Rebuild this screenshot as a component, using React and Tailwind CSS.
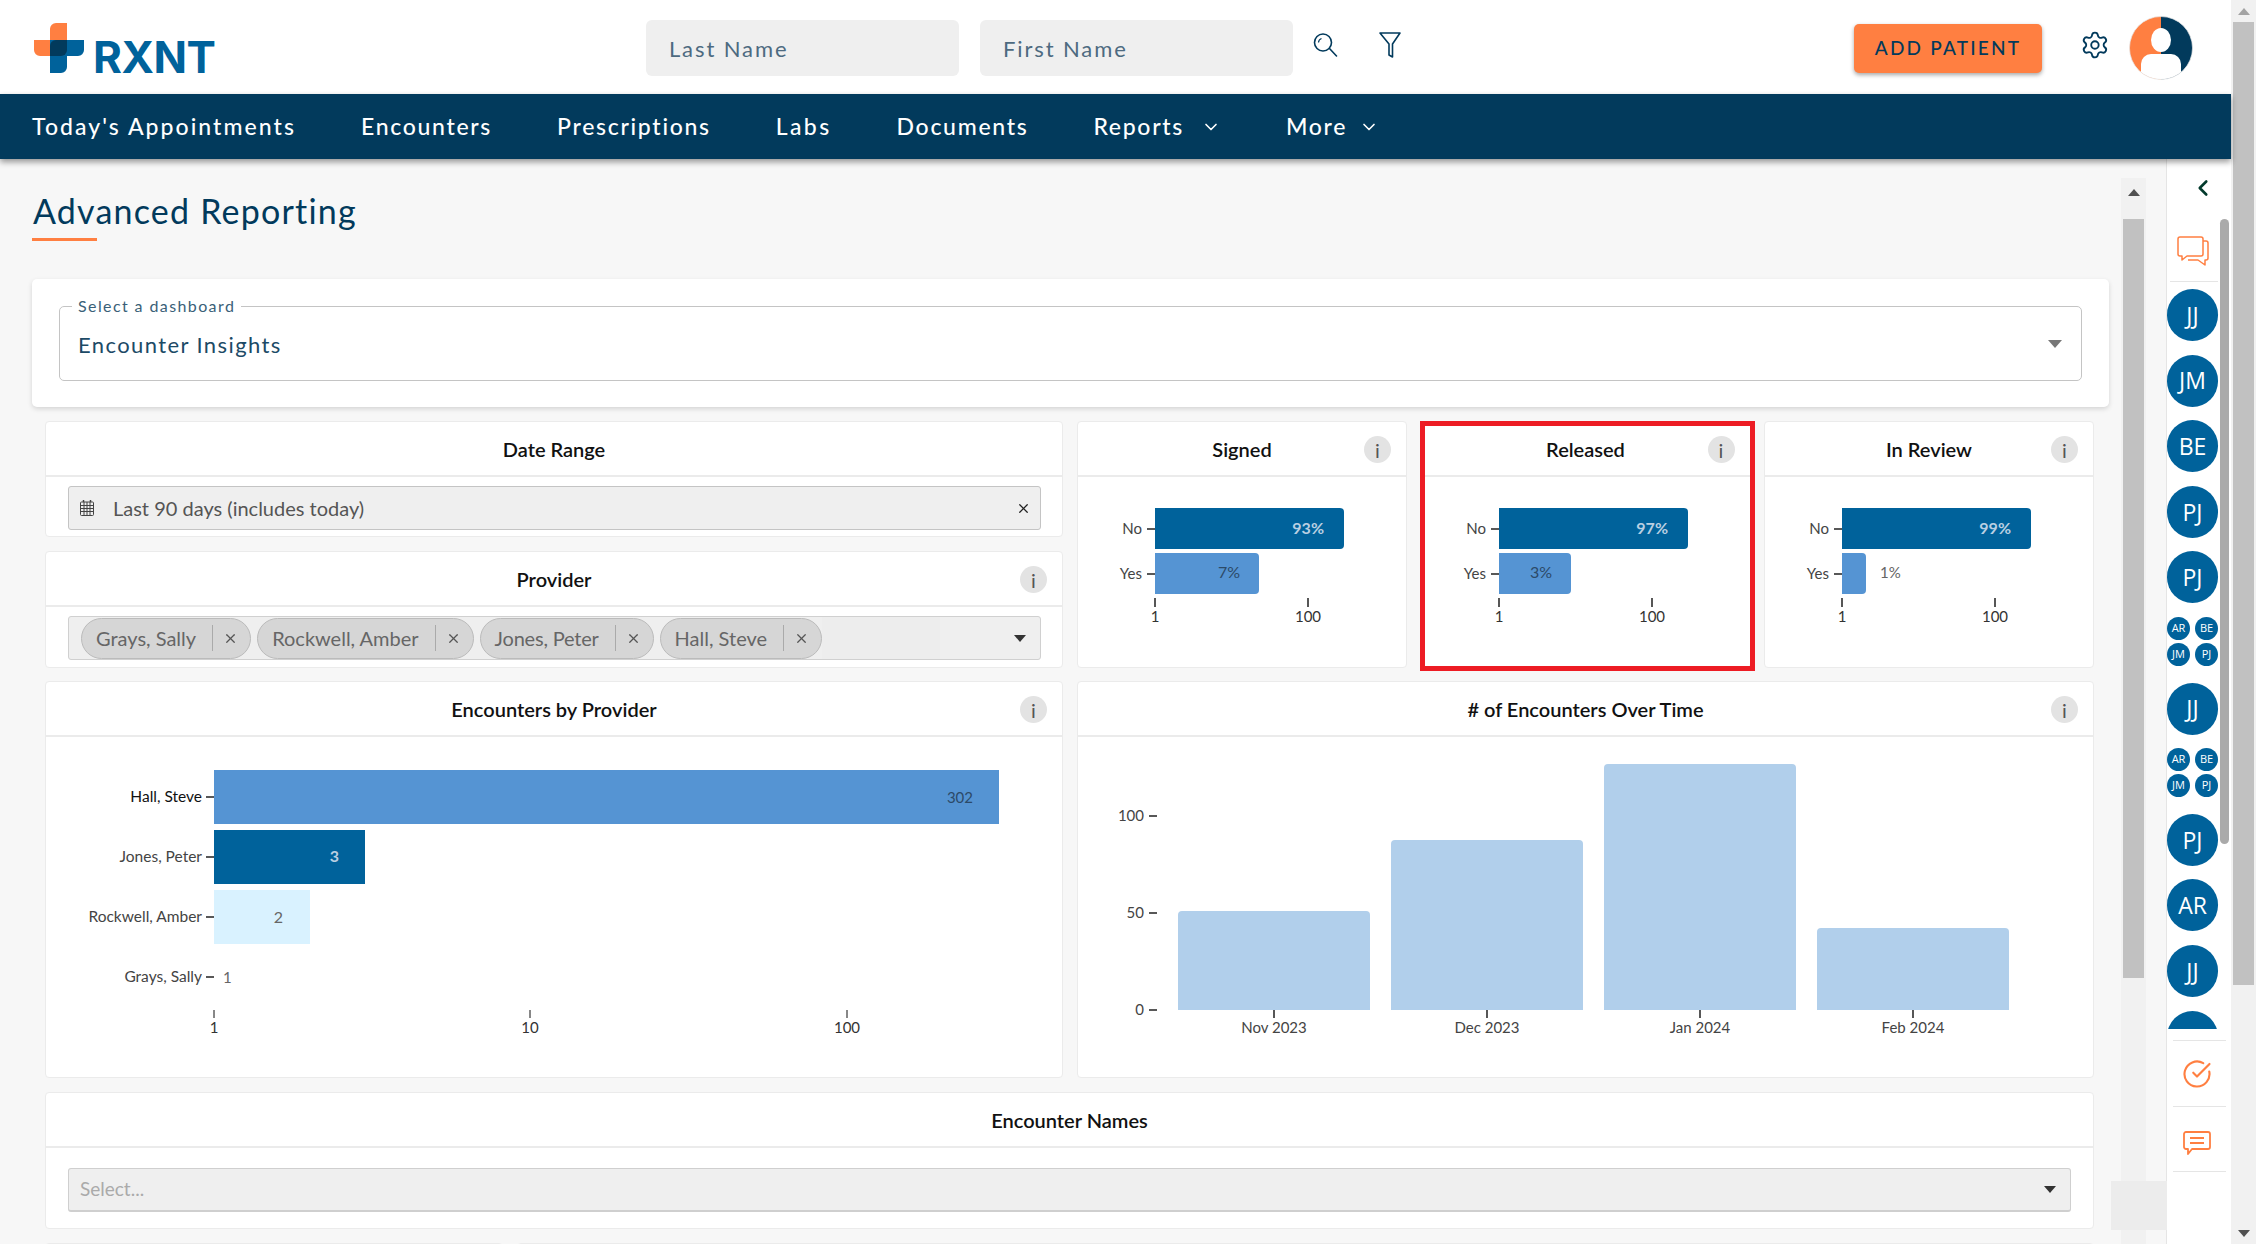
import { ChevronDown, ChevronLeft, CircleCheckBig, Settings, X } from 'lucide-react';

const CHIPS = [
  { name: 'Grays, Sally', cls: '' },
  { name: 'Rockwell, Amber', cls: '' },
  { name: 'Jones, Peter', cls: 'tracking-[-0.2px]' },
  { name: 'Hall, Steve', cls: '' },
];
const SIDE = ['JJ', 'JM', 'BE', 'PJ', 'PJ', null, 'JJ', null, 'PJ', 'AR', 'JJ', ''];

function Logo() {
  return (
    <div className="flex items-end gap-[9px]">
      <svg width="50" height="50" viewBox="0 0 50 50">
        <path d="M16 17V6a6 6 0 0 1 6-6h11v33H6a6 6 0 0 1-6-6V17z" fill="#ff7f41" />
        <path d="M16 17h34v10a6 6 0 0 1-6 6H33v11a6 6 0 0 1-6 6H16z" fill="#00629b" />
        <path d="M22 17h11v10a6 6 0 0 1-6 6H16V23a6 6 0 0 1 6-6z" fill="#023a5c" />
      </svg>
      <span className="font-['Inter',sans-serif] text-[44px] font-bold leading-[32px] tracking-[-0.5px] text-[#00629b]">RXNT</span>
    </div>
  );
}

function SearchIcon() {
  return (
    <svg width="25" height="24" viewBox="0 0 25 24" fill="none" stroke="#023a5c" strokeWidth="1.6">
      <circle cx="10" cy="9.5" r="8.5" />
      <path d="M16.5 15.5l7 7.5" strokeLinecap="round" />
      <path d="M5.5 9.5a4.5 4.5 0 0 1 3-4" strokeWidth="1.2" />
    </svg>
  );
}

function FilterIcon() {
  return (
    <svg width="22" height="26" viewBox="0 0 22 26" fill="none" stroke="#023a5c" strokeWidth="1.6" strokeLinejoin="round">
      <path d="M1 1h20l-7.5 11v13l-3.5-2V12z" />
    </svg>
  );
}

function UserAvatar() {
  return (
    <svg width="64" height="64" viewBox="0 0 64 64">
      <defs>
        <clipPath id="userclip">
          <circle cx="32" cy="32" r="31.5" />
        </clipPath>
      </defs>
      <g clipPath="url(#userclip)">
        <rect width="32" height="64" fill="#ff7f41" />
        <rect x="32" width="32" height="64" fill="#023a5c" />
        <ellipse cx="32" cy="24" rx="10" ry="12" fill="#fff" />
        <path d="M12 64V48a10 10 0 0 1 10-10h20a10 10 0 0 1 10 10v16z" fill="#fff" />
      </g>
      <circle cx="32" cy="32" r="31.5" fill="none" stroke="#e5e5e5" strokeWidth="0.7" />
    </svg>
  );
}

function Header() {
  return (
    <div className="h-[94px] bg-white flex items-center pl-[34px] pr-[38px] pt-[2px]">
      <div className="w-[614.5px] pb-[1px]">
        <Logo />
      </div>
      <div className="flex gap-[21px]">
        <div className="w-[313px] h-[56px] bg-[#efefef] rounded-[6px] flex items-center pl-[23px] text-[22px] tracking-[1.9px] text-[#4d6a80]">Last Name</div>
        <div className="w-[313px] h-[56px] bg-[#efefef] rounded-[6px] flex items-center pl-[23px] text-[22px] tracking-[1.9px] text-[#4d6a80]">First Name</div>
      </div>
      <div className="ml-[20px] mb-[7px]">
        <SearchIcon />
      </div>
      <div className="ml-[41px] mb-[6px]">
        <FilterIcon />
      </div>
      <button className="ml-[453px] w-[189px] h-[49px] bg-[#ff7f41] rounded-[5px] shadow-[0_2px_4px_rgba(0,0,0,0.35)] text-[19px] font-medium tracking-[2.2px] text-[#023a5c]">ADD PATIENT</button>
      <Settings className="ml-[38px] mb-[6px]" size={30} color="#023a5c" strokeWidth={1.5} />
      <div className="ml-[19px]">
        <UserAvatar />
      </div>
    </div>
  );
}

function Nav() {
  return (
    <div className="relative z-10 h-[65px] bg-[#023a5c] shadow-[0_3px_6px_rgba(0,0,0,0.4)] flex items-center pl-[32px] gap-[65px] text-[23px] font-medium tracking-[1.7px] text-white">
      <span className="tracking-[2.05px]">Today's Appointments</span>
      <span>Encounters</span>
      <span>Prescriptions</span>
      <span className="tracking-[2.4px]">Labs</span>
      <span>Documents</span>
      <span className="flex items-center gap-[17px]">
        Reports <ChevronDown size={20} />
      </span>
      <span className="flex items-center gap-[12px]">
        More <ChevronDown size={20} />
      </span>
    </div>
  );
}

function Info() {
  return (
    <div className="absolute right-[15px] top-[14px] w-[27px] h-[27px] rounded-full bg-[#e3e3e3] flex items-center justify-center text-[20px] leading-none text-[#555]">i</div>
  );
}

function Panel({ title, info, className = '', children }) {
  return (
    <div className={`relative bg-white border border-[#ebebeb] rounded-[4px] ${className}`}>
      <div className="h-[55px] border-b-2 border-[#ebebeb] flex items-center justify-center text-[20px] font-semibold text-[#111]">{title}</div>
      {info && <Info />}
      {children}
    </div>
  );
}

function CalendarIcon() {
  return (
    <svg width="14" height="16" viewBox="0 0 14 16" fill="none" stroke="#444" strokeWidth="1">
      <rect x="0.5" y="2" width="13" height="13.5" rx="1" />
      <path d="M0.5 5.5h13M0.5 8.5h13M0.5 11.5h13M4 2v13.5M7 2v13.5M10 2v13.5" />
      <path d="M3.5 0v2M10.5 0v2" strokeWidth="1.5" />
    </svg>
  );
}

function DateField() {
  return (
    <div className="ml-[22px] mr-[21px] mt-[9px] h-[44px] bg-[#efefef] border border-[#c4c4c4] rounded-[3px] flex items-center pl-[11px] pr-[9px] text-[20px] text-[#555]">
      <CalendarIcon />
      <span className="ml-[19px] flex-1">Last 90 days (includes today)</span>
      <X size={15} color="#222" strokeWidth={2} />
    </div>
  );
}

function Caret() {
  return <div className="w-0 h-0 border-l-[6px] border-r-[6px] border-t-[7px] border-l-transparent border-r-transparent border-t-[#333]" />;
}

function ProviderField() {
  return (
    <div className="ml-[22px] mr-[21px] mt-[9px] h-[44px] bg-[#efefef] border border-[#d0d0d0] rounded-[3px] flex items-center pl-[12px] pr-[14px]">
      <div className="flex gap-[6px] flex-1 items-center">
        {CHIPS.map((c) => (
          <div key={c.name} className={`h-[41px] bg-[#d6d6d6] border border-[#bbb] rounded-full flex items-center pl-[14px] pr-[12px] text-[20px] text-[#666] ${c.cls}`}>
            <span>{c.name}</span>
            <span className="ml-[16px] h-[26px] border-l border-[#aaa] pl-[10px] flex items-center">
              <X size={15} color="#555" strokeWidth={2} />
            </span>
          </div>
        ))}
        <div className="-ml-[6px] w-[118px] h-[42px] bg-[#ededed]" />
      </div>
      <Caret />
    </div>
  );
}

function MiniChart({ noLabel, yesLabel, yesWidth }) {
  const outside = yesWidth < 40;
  return (
    <svg width="328" height="190" viewBox="0 0 328 190" className="block">
      <path d="M77 31h185a4 4 0 0 1 4 4v33a4 4 0 0 1-4 4H77z" fill="#00629b" />
      <path d={`M77 76h${yesWidth - 4}a4 4 0 0 1 4 4v33a4 4 0 0 1-4 4H77z`} fill="#5594d3" />
      <text x="246" y="57" textAnchor="end" fontSize="16" fontWeight="700" fill="#b9cfe2">{noLabel}</text>
      {outside ? (
        <text x={77 + yesWidth + 14} y="101" fontSize="15" fill="#666">{yesLabel}</text>
      ) : (
        <text x={77 + yesWidth - 19} y="101" textAnchor="end" fontSize="16" fill="#2c4a68">{yesLabel}</text>
      )}
      <path d="M69 52h8M69 97h8" stroke="#222" strokeWidth="1.5" />
      <text x="64" y="57" textAnchor="end" fontSize="15" fill="#444">No</text>
      <text x="64" y="102" textAnchor="end" fontSize="15" fill="#444">Yes</text>
      <path d="M77 121v9M230 121v9" stroke="#111" strokeWidth="1.4" />
      <text x="77" y="145" textAnchor="middle" fontSize="15" fill="#333">1</text>
      <text x="230" y="145" textAnchor="middle" fontSize="15" fill="#333">100</text>
    </svg>
  );
}

function ProviderChart() {
  return (
    <svg width="1015" height="340" viewBox="46 735 1015 340" className="block">
      <rect x="214" y="768" width="785" height="54" fill="#5594d3" />
      <rect x="214" y="828" width="151" height="54" fill="#00629b" />
      <rect x="214" y="888" width="96" height="54" fill="#d9f2ff" />
      <text x="973" y="801" textAnchor="end" fontSize="15" fill="#2c4a68">302</text>
      <text x="339" y="860" textAnchor="end" fontSize="16" fontWeight="700" fill="#b9cfe2">3</text>
      <text x="283" y="921" textAnchor="end" fontSize="16" fill="#666">2</text>
      <text x="223" y="981" fontSize="15" fill="#666">1</text>
      <path d="M206 795h8M206 855h8M206 915h8M206 975h8" stroke="#222" strokeWidth="1.5" />
      <text x="202" y="800" textAnchor="end" fontSize="15.5" fill="#111">Hall, Steve</text>
      <text x="202" y="860" textAnchor="end" fontSize="15.5" fill="#444">Jones, Peter</text>
      <text x="202" y="920" textAnchor="end" fontSize="15.5" fill="#444">Rockwell, Amber</text>
      <text x="202" y="980" textAnchor="end" fontSize="15.5" fill="#444">Grays, Sally</text>
      <path d="M214 1008v8M530 1008v8M847 1008v8" stroke="#111" strokeWidth="1" />
      <text x="214" y="1031" textAnchor="middle" fontSize="15" fill="#333">1</text>
      <text x="530" y="1031" textAnchor="middle" fontSize="15" fill="#333">10</text>
      <text x="847" y="1031" textAnchor="middle" fontSize="15" fill="#333">100</text>
    </svg>
  );
}

function TimeChart() {
  const bars = [
    { x: 1178, top: 909, label: 'Nov 2023' },
    { x: 1391, top: 838, label: 'Dec 2023' },
    { x: 1604, top: 762, label: 'Jan 2024' },
    { x: 1817, top: 926, label: 'Feb 2024' },
  ];
  return (
    <svg width="1015" height="340" viewBox="1078 735 1015 340" className="block">
      {bars.map((b) => (
        <g key={b.label}>
          <path d={`M${b.x} 1008V${b.top + 4}a4 4 0 0 1 4-4h184a4 4 0 0 1 4 4V1008z`} fill="#b1cfeb" />
          <path d={`M${b.x + 96} 1008v8`} stroke="#111" strokeWidth="1.4" />
          <text x={b.x + 96} y="1031" textAnchor="middle" fontSize="15" fill="#444">{b.label}</text>
        </g>
      ))}
      <path d="M1149 814h8M1149 911h8M1149 1008h8" stroke="#222" strokeWidth="1.5" />
      <text x="1144" y="819" textAnchor="end" fontSize="15" fill="#444">100</text>
      <text x="1144" y="916" textAnchor="end" fontSize="15" fill="#444">50</text>
      <text x="1144" y="1013" textAnchor="end" fontSize="15" fill="#444">0</text>
    </svg>
  );
}

function Dashboard() {
  return (
    <div className="ml-[45px] mt-[14px] w-[2049px] flex flex-col">
      <div className="grid grid-cols-[1018px_1017px] gap-x-[14px] gap-y-[13px]">
        <div className="flex flex-col gap-[14px]">
          <Panel title="Date Range" className="h-[116px]">
            <DateField />
          </Panel>
          <Panel title="Provider" info className="h-[117px]">
            <ProviderField />
          </Panel>
        </div>
        <div className="grid grid-cols-3 gap-[13.5px] h-[247px]">
          <Panel title="Signed" info>
            <MiniChart noLabel="93%" yesLabel="7%" yesWidth={104} />
          </Panel>
          <div className="relative">
            <Panel title="Released" info className="h-full">
              <MiniChart noLabel="97%" yesLabel="3%" yesWidth={72} />
            </Panel>
            <div className="absolute -left-[1px] top-0 w-[335px] h-[250px] border-[5px] border-[#ed1c24]" />
          </div>
          <Panel title="In Review" info>
            <MiniChart noLabel="99%" yesLabel="1%" yesWidth={24} />
          </Panel>
        </div>
        <Panel title="Encounters by Provider" info className="h-[397px]">
          <ProviderChart />
        </Panel>
        <Panel title="# of Encounters Over Time" info className="h-[397px]">
          <TimeChart />
        </Panel>
      </div>
      <Panel title="Encounter Names" className="mt-[14px] h-[137px]">
        <div className="mx-[22px] mt-[20px] h-[44px] bg-[#efefef] border border-[#cfcfcf] border-b-2 rounded-[3px] flex items-center pl-[11px] pr-[14px] text-[19px] text-[#aaa]">
          <span className="flex-1">Select...</span>
          <Caret />
        </div>
      </Panel>
      <div className="mt-[14px] flex gap-[14px]">
        <div className="w-[458px] h-[60px] bg-white border border-[#ebebeb] rounded-[4px]" />
        <div className="flex-1 h-[60px] bg-white border border-[#ebebeb] rounded-[4px]" />
      </div>
    </div>
  );
}

function ChatIcon() {
  return (
    <svg width="32" height="30" viewBox="0 0 32 30" fill="none" stroke="#ff7f41" strokeWidth="1.5" strokeLinejoin="round">
      <path d="M3 1h21a2 2 0 0 1 2 2v15a2 2 0 0 1-2 2H10l-5 4v-4H3a2 2 0 0 1-2-2V3a2 2 0 0 1 2-2z" />
      <path d="M26 5h3a2 2 0 0 1 2 2v15a2 2 0 0 1-2 2h-1v5l-7-5H11" />
    </svg>
  );
}

function CommentIcon() {
  return (
    <svg width="28" height="24" viewBox="0 0 28 24" fill="none" stroke="#ff7f41" strokeWidth="1.8" strokeLinejoin="round">
      <path d="M3 1h22a2 2 0 0 1 2 2v13a2 2 0 0 1-2 2H9l-4 5v-5H3a2 2 0 0 1-2-2V3a2 2 0 0 1 2-2z" />
      <path d="M7 7h14M7 12h14" />
    </svg>
  );
}

function Circle({ label }) {
  return (
    <div className="w-[51px] h-[52px] shrink-0 rounded-full bg-[#00629b] flex items-center justify-center font-['Open_Sans',sans-serif] text-[23px] text-white">{label}</div>
  );
}

function CircleGroup() {
  return (
    <div className="w-[51px] h-[52px] shrink-0 grid grid-cols-[23px_23px] gap-x-[5px] gap-y-[3px] content-start">
      {['AR', 'BE', 'JM', 'PJ'].map((l) => (
        <div key={l} className="h-[23px] rounded-full bg-[#00629b] flex items-center justify-center font-['Open_Sans',sans-serif] text-[11px] text-white">{l}</div>
      ))}
    </div>
  );
}

function Sidebar() {
  return (
    <div className="relative w-[65px] bg-white border-l border-[#e5e5e5] flex flex-col overflow-hidden">
      <div className="h-[122px] border-0 flex flex-col">
        <div className="h-[62px] pl-[23px] pt-[16px]">
          <ChevronLeft size={26} color="#023a2c" strokeWidth={2.4} />
        </div>
        <div className="pl-[10px] pt-[15px]">
          <ChatIcon />
        </div>
      </div>
      <div className="ml-[3px] w-[48px] border-t border-[#e5e5e5]" />
      <div className="mt-[7px] h-[740px] overflow-hidden flex flex-col gap-[13.6px]">
        {SIDE.map((s, i) => (s === null ? <CircleGroup key={i} /> : <Circle key={i} label={s} />))}
      </div>
      <div className="ml-[6px] mt-[11px] w-[53px] border-t border-[#e5e5e5]" />
      <div className="h-[65px] pl-[15px] flex items-center">
        <CircleCheckBig size={30} color="#ff7f41" strokeWidth={1.7} />
      </div>
      <div className="ml-[6px] w-[53px] border-t border-[#e5e5e5]" />
      <div className="h-[64px] pl-[16px] pt-[8px] flex items-center">
        <CommentIcon />
      </div>
      <div className="ml-[6px] w-[53px] border-t border-[#e5e5e5]" />
      <div className="absolute left-[53px] top-[60px] w-[9px] h-[625px] rounded-full bg-[#aaa]" />
    </div>
  );
}

function ArrowUp({ color = '#505050' }) {
  return <div className="w-0 h-0 border-l-[6px] border-r-[6px] border-b-[7px] border-l-transparent border-r-transparent" style={{ borderBottomColor: color }} />;
}

function ArrowDown({ color = '#505050' }) {
  return <div className="w-0 h-0 border-l-[6px] border-r-[6px] border-t-[7px] border-l-transparent border-r-transparent" style={{ borderTopColor: color }} />;
}

export default function App() {
  return (
    <div className="w-[2256px] h-[1244px] overflow-hidden flex font-['Lato',sans-serif] bg-[#f7f7f7]">
      <div className="w-[2231px] h-full flex flex-col">
        <Header />
        <Nav />
        <div className="relative flex-1 flex min-h-0">
          <div className="w-[2122px] overflow-hidden">
            <div className="pl-[33px] pt-[29px]">
              <h1 className="text-[34px] leading-[46px] tracking-[1.2px] text-[#023a5c]">Advanced Reporting</h1>
              <div className="-ml-[1px] mt-[4px] w-[65px] h-[3px] bg-[#ff7f41]" />
            </div>
            <div className="ml-[32px] mt-[38px] w-[2077px] h-[128px] bg-white rounded-[5px] shadow-[0_2px_5px_rgba(0,0,0,0.14)] px-[27px] pt-[19px]">
              <fieldset className="relative h-[83px] border border-[#c4c4c4] rounded-[5px]">
                <legend className="ml-[12px] px-[6px] text-[16px] tracking-[1.4px] text-[#3a5f78] leading-none">Select a dashboard</legend>
                <div className="flex items-center h-[60px] pl-[18px] pr-[19px] text-[22px] tracking-[1.4px] text-[#1c4a66]">
                  <span className="flex-1">Encounter Insights</span>
                  <div className="w-0 h-0 border-l-[7px] border-r-[7px] border-t-[8px] border-l-transparent border-r-transparent border-t-[#777]" />
                </div>
              </fieldset>
            </div>
            <Dashboard />
          </div>
          <div className="mt-[19px] w-[25px] bg-[#f1f1f1] flex flex-col items-center">
            <div className="h-[22px] mt-[11px]">
              <ArrowUp />
            </div>
            <div className="mt-[8px] w-[21px] h-[759px] bg-[#c1c1c1]" />
          </div>
          <div className="w-[20px]" />
          <Sidebar />
          <div className="absolute left-[2111px] bottom-[14px] w-[56px] h-[49px] bg-[#ececec]" />
        </div>
      </div>
      <div className="w-[25px] h-full bg-[#f1f1f1] flex flex-col items-center">
        <div className="h-[22px] pt-[8px]">
          <ArrowUp color="#a3a3a3" />
        </div>
        <div className="w-[21px] h-[963px] bg-[#c1c1c1]" />
        <div className="flex-1" />
        <div className="pb-[7px]">
          <ArrowDown />
        </div>
      </div>
    </div>
  );
}
